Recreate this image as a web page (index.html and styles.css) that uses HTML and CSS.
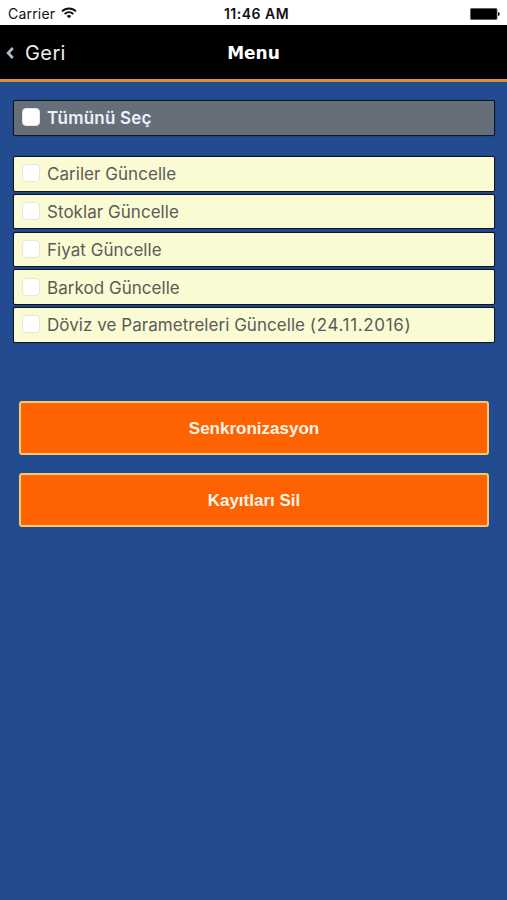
FILE: index.html
```html
<!DOCTYPE html>
<html lang="tr">
<head>
    <meta charset="UTF-8">
    <meta name="viewport" content="width=device-width, initial-scale=1.0">
    <title>Menu</title>
    <link rel="stylesheet" href="styles.css">
</head>
<body>
    <div class="status-bar">
        <div class="carrier">
            <span>Carrier</span>
            <svg class="wifi" width="16" height="12" viewBox="0 0 16 12" fill="none" stroke="#111" stroke-width="1.9">
                <path d="M1 4.4C5 0.5 11 0.5 15 4.4"/>
                <path d="M3.6 7C6.2 4.6 9.8 4.6 12.4 7"/>
                <path d="M8 11.3L5.6 8.9C7 7.7 9 7.7 10.4 8.9Z" fill="#111" stroke="none"/>
            </svg>
        </div>
        <div class="clock">11:46 AM</div>
        <div class="battery">
            <svg width="30" height="12" viewBox="0 0 30 12">
                <rect x="0.5" y="0.5" width="26.5" height="11" rx="1" fill="#000" stroke="#555" stroke-width="0.8"/>
                <path d="M28 4C30.3 4.6 30.3 7.4 28 8Z" fill="#111"/>
            </svg>
        </div>
    </div>

    <header class="navbar">
        <a class="back" href="#">
            <svg width="8" height="12" viewBox="0 0 8 12" fill="none" stroke="#a9bccb" stroke-width="2.8">
                <path d="M6.8 1L2.2 6L6.8 11"/>
            </svg>
            <span>Geri</span>
        </a>
        <h1>Menu</h1>
        <div class="spacer"></div>
    </header>

    <main>
        <label class="row select-all">
            <input type="checkbox">
            <span>Tümünü Seç</span>
        </label>

        <div class="list">
            <label class="row">
                <input type="checkbox">
                <span>Cariler Güncelle</span>
            </label>
            <label class="row">
                <input type="checkbox">
                <span>Stoklar Güncelle</span>
            </label>
            <label class="row">
                <input type="checkbox">
                <span>Fiyat Güncelle</span>
            </label>
            <label class="row">
                <input type="checkbox">
                <span>Barkod Güncelle</span>
            </label>
            <label class="row">
                <input type="checkbox">
                <span>Döviz ve Parametreleri Güncelle <time class="date">(24.11.2016)</time></span>
            </label>
        </div>

        <div class="actions">
            <button type="button">Senkronizasyon</button>
            <button type="button">Kayıtları Sil</button>
        </div>
    </main>
</body>
</html>
```
FILE: styles.css
```css
* {
    box-sizing: border-box;
}

body {
    margin: 0;
    min-height: 900px;
    background-color: #234b8f;
    font-family: Inter, "Liberation Sans", sans-serif;
}

.status-bar {
    display: grid;
    grid-template-columns: 1fr auto 1fr;
    align-items: center;
    height: 25px;
    padding: 2px 7px 0 8px;
    background-color: #fff;
    color: #111;
    font-size: 14px;
}

.carrier {
    display: flex;
    align-items: center;
    gap: 6px;
    letter-spacing: 0.2px;
}

.wifi {
    margin-top: -2px;
}

.clock {
    padding-left: 5px;
    font-weight: 600;
    letter-spacing: 0.5px;
}

.battery {
    display: flex;
    justify-content: flex-end;
}

.navbar {
    display: grid;
    grid-template-columns: 1fr auto 1fr;
    align-items: center;
    height: 57px;
    padding: 2px 6px 0;
    background-color: #000;
    border-bottom: 3px solid #dc9138;
    color: #fff;
}

.back {
    display: flex;
    align-items: center;
    gap: 11px;
    color: #eee;
    font-size: 20px;
    letter-spacing: 0.4px;
    text-decoration: none;
}

.navbar h1 {
    margin: 0;
    font-family: "DejaVu Sans", sans-serif;
    font-size: 17px;
    font-weight: bold;
}

main {
    padding: 18px 12px 0 13px;
}

.row {
    display: flex;
    align-items: center;
    height: 35.5px;
    padding: 0 8px;
    gap: 7px;
    background-color: #fafbd2;
    border: 1px solid #0c1626;
    border-radius: 2px;
    box-shadow: 0 0 1px #0c1626;
    color: #5b5b5b;
    font-size: 17px;
    letter-spacing: 0.04px;
}

.row input {
    appearance: none;
    width: 18px;
    height: 18px;
    margin: -1px 0 0;
    background-color: #fff;
    border: 1px solid #e6e6dc;
    border-radius: 4px;
}

.row span {
    padding-top: 1px;
}

.date {
    letter-spacing: 0.65px;
}

.select-all {
    background-color: #666e79;
    color: #eef1fb;
    font-weight: 600;
    letter-spacing: 0.2px;
}

.list {
    display: flex;
    flex-direction: column;
    gap: 2.3px;
    margin-top: 20.5px;
}

.actions {
    display: flex;
    flex-direction: column;
    gap: 18px;
    margin-top: 58.5px;
    padding: 0 6px;
}

button {
    height: 54px;
    padding: 2px 0 0;
    background-color: #ff6200;
    border: 2px solid #f2cb70;
    border-radius: 3px;
    color: #fff5e8;
    font-family: "Liberation Sans", Arial, sans-serif;
    font-size: 17px;
    font-weight: bold;
}
```
